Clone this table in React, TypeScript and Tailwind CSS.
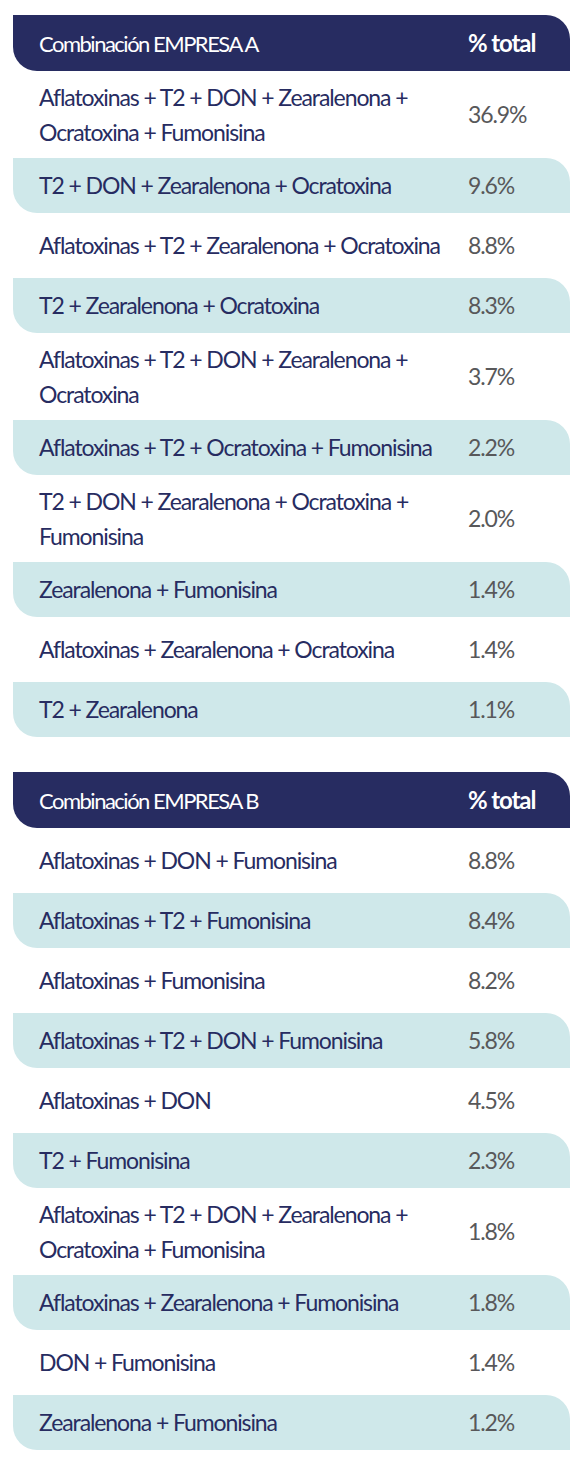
import React from 'react';

interface Row {
    name: string[];
    pct: string;
}

const empresaA: Row[] = [
    { name: ['Aflatoxinas + T2 + DON + Zearalenona +', 'Ocratoxina + Fumonisina'], pct: '36.9%' },
    { name: ['T2 + DON + Zearalenona + Ocratoxina'], pct: '9.6%' },
    { name: ['Aflatoxinas + T2 + Zearalenona + Ocratoxina'], pct: '8.8%' },
    { name: ['T2 + Zearalenona + Ocratoxina'], pct: '8.3%' },
    { name: ['Aflatoxinas + T2 + DON + Zearalenona +', 'Ocratoxina'], pct: '3.7%' },
    { name: ['Aflatoxinas + T2 + Ocratoxina + Fumonisina'], pct: '2.2%' },
    { name: ['T2 + DON + Zearalenona + Ocratoxina +', 'Fumonisina'], pct: '2.0%' },
    { name: ['Zearalenona + Fumonisina'], pct: '1.4%' },
    { name: ['Aflatoxinas + Zearalenona + Ocratoxina'], pct: '1.4%' },
    { name: ['T2 + Zearalenona'], pct: '1.1%' },
];

const empresaB: Row[] = [
    { name: ['Aflatoxinas + DON + Fumonisina'], pct: '8.8%' },
    { name: ['Aflatoxinas + T2 + Fumonisina'], pct: '8.4%' },
    { name: ['Aflatoxinas + Fumonisina'], pct: '8.2%' },
    { name: ['Aflatoxinas + T2 + DON + Fumonisina'], pct: '5.8%' },
    { name: ['Aflatoxinas + DON'], pct: '4.5%' },
    { name: ['T2 + Fumonisina'], pct: '2.3%' },
    { name: ['Aflatoxinas + T2 + DON + Zearalenona +', 'Ocratoxina + Fumonisina'], pct: '1.8%' },
    { name: ['Aflatoxinas + Zearalenona + Fumonisina'], pct: '1.8%' },
    { name: ['DON + Fumonisina'], pct: '1.4%' },
    { name: ['Zearalenona + Fumonisina'], pct: '1.2%' },
];

const ComboTable: React.FC<{ title: string; rows: Row[] }> = ({ title, rows }) => (
    <div className="w-[557px]">
        {/* Header */}
        <div className="h-[56px] bg-[#272c61] rounded-tr-[24px] rounded-bl-[24px] flex items-center pl-[26px] text-white">
            <div className="w-[429px] text-[22px] tracking-[-1.5px]">{title}</div>
            <div className="font-bold text-[24px] tracking-[-1.1px]">% total</div>
        </div>
        {rows.map((row, i) => {
            const shaded = i % 2 === 1;
            const height = shaded ? 'h-[55px]' : row.name.length === 2 ? 'h-[87px]' : 'h-[65px]';
            return (
                <div
                    key={i}
                    className={`${height} flex items-center pl-[26px] text-[23px] tracking-[-1.1px] ${shaded ? 'bg-[#cfe8ea] rounded-tr-[24px] rounded-bl-[24px]' : ''}`}
                >
                    <div className="w-[429px] text-[#272c61] leading-[35px] whitespace-nowrap">
                        {row.name.map((line, j) => (
                            <div key={j}>{line}</div>
                        ))}
                    </div>
                    <div className="text-[#58585a]">{row.pct}</div>
                </div>
            );
        })}
    </div>
);

export default function App() {
    return (
        <div
            className="bg-white w-[582px] min-h-[1460px] pt-[15px] pl-[13px] flex flex-col gap-[35px]"
            style={{ fontFamily: 'Lato, "Liberation Sans", Arial, sans-serif' }}
        >
            <ComboTable title="Combinación EMPRESA A" rows={empresaA} />
            <ComboTable title="Combinación EMPRESA B" rows={empresaB} />
        </div>
    );
}
